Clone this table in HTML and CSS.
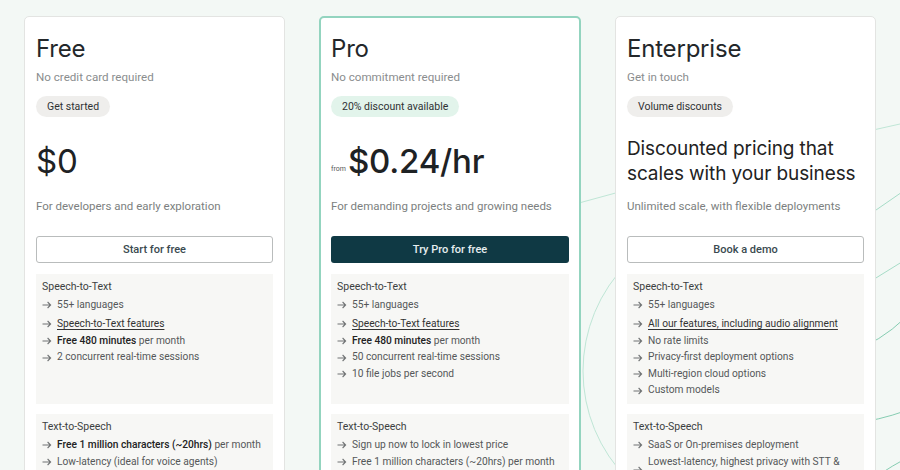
FILE: index.html
```html
<!DOCTYPE html>
<html lang="en">
<head>
<meta charset="utf-8">
<title>Pricing</title>
<link rel="stylesheet" href="styles.css">
</head>
<body>
<div class="stage">
  <svg class="deco" width="900" height="470" viewBox="0 0 900 470" aria-hidden="true">
    <path d="M540 214 Q700 168 900 124" class="l1"/>
    <path d="M736 218 A153 153 0 0 0 736 524" class="l1"/>
    <path d="M850 228 L905 190" class="l2"/>
    <path d="M850 294 L905 260" class="l2"/>
    <path d="M850 352 Q880 342 905 318" class="l3"/>
    <path d="M850 424 Q880 420 905 411" class="l3"/>
    <path d="M880 474 Q892 466 905 459" class="l3"/>
  </svg>
  <main class="plans">
    <section class="card">
      <h2 class="plan-name">Free</h2>
      <p class="plan-sub">No credit card required</p>
      <span class="badge">Get started</span>
      <div class="price-block"><span class="price">$0</span></div>
      <p class="plan-desc">For developers and early exploration</p>
      <a class="btn btn-outline" href="#">Start for free</a>
      <div class="feat feat-stt">
        <h3 class="feat-title">Speech-to-Text</h3>
        <ul>
          <li><svg class="arr" viewBox="0 0 10 10"><path d="M0.5 5h8.2M5.6 2L8.6 5 5.6 8"/></svg><span>55+ languages</span></li>
          <li class="link-item"><svg class="arr" viewBox="0 0 10 10"><path d="M0.5 5h8.2M5.6 2L8.6 5 5.6 8"/></svg><a href="#">Speech-to-Text features</a></li>
          <li><svg class="arr" viewBox="0 0 10 10"><path d="M0.5 5h8.2M5.6 2L8.6 5 5.6 8"/></svg><span><b>Free 480 minutes</b> per month</span></li>
          <li><svg class="arr" viewBox="0 0 10 10"><path d="M0.5 5h8.2M5.6 2L8.6 5 5.6 8"/></svg><span>2 concurrent real-time sessions</span></li>
        </ul>
      </div>
      <div class="feat">
        <h3 class="feat-title">Text-to-Speech</h3>
        <ul>
          <li><svg class="arr" viewBox="0 0 10 10"><path d="M0.5 5h8.2M5.6 2L8.6 5 5.6 8"/></svg><span><b>Free 1 million characters (~20hrs)</b> per month</span></li>
          <li><svg class="arr" viewBox="0 0 10 10"><path d="M0.5 5h8.2M5.6 2L8.6 5 5.6 8"/></svg><span>Low-latency (ideal for voice agents)</span></li>
          <li><svg class="arr" viewBox="0 0 10 10"><path d="M0.5 5h8.2M5.6 2L8.6 5 5.6 8"/></svg><span>Standard voices</span></li>
        </ul>
      </div>
    </section>

    <section class="card card-pro">
      <h2 class="plan-name">Pro</h2>
      <p class="plan-sub">No commitment required</p>
      <span class="badge badge-green">20% discount available</span>
      <div class="price-block"><span class="from">from</span><span class="price price-pro">$0.24/hr</span></div>
      <p class="plan-desc">For demanding projects and growing needs</p>
      <a class="btn btn-dark" href="#">Try Pro for free</a>
      <div class="feat feat-stt">
        <h3 class="feat-title">Speech-to-Text</h3>
        <ul>
          <li><svg class="arr" viewBox="0 0 10 10"><path d="M0.5 5h8.2M5.6 2L8.6 5 5.6 8"/></svg><span>55+ languages</span></li>
          <li class="link-item"><svg class="arr" viewBox="0 0 10 10"><path d="M0.5 5h8.2M5.6 2L8.6 5 5.6 8"/></svg><a href="#">Speech-to-Text features</a></li>
          <li><svg class="arr" viewBox="0 0 10 10"><path d="M0.5 5h8.2M5.6 2L8.6 5 5.6 8"/></svg><span><b>Free 480 minutes</b> per month</span></li>
          <li><svg class="arr" viewBox="0 0 10 10"><path d="M0.5 5h8.2M5.6 2L8.6 5 5.6 8"/></svg><span>50 concurrent real-time sessions</span></li>
          <li><svg class="arr" viewBox="0 0 10 10"><path d="M0.5 5h8.2M5.6 2L8.6 5 5.6 8"/></svg><span>10 file jobs per second</span></li>
        </ul>
      </div>
      <div class="feat">
        <h3 class="feat-title">Text-to-Speech</h3>
        <ul>
          <li><svg class="arr" viewBox="0 0 10 10"><path d="M0.5 5h8.2M5.6 2L8.6 5 5.6 8"/></svg><span>Sign up now to lock in lowest price</span></li>
          <li><svg class="arr" viewBox="0 0 10 10"><path d="M0.5 5h8.2M5.6 2L8.6 5 5.6 8"/></svg><span>Free 1 million characters (~20hrs) per month</span></li>
          <li><svg class="arr" viewBox="0 0 10 10"><path d="M0.5 5h8.2M5.6 2L8.6 5 5.6 8"/></svg><span>Low-latency (ideal for voice agents)</span></li>
        </ul>
      </div>
    </section>

    <section class="card">
      <h2 class="plan-name">Enterprise</h2>
      <p class="plan-sub">Get in touch</p>
      <span class="badge">Volume discounts</span>
      <div class="price-block"><span class="price-text">Discounted pricing that scales with your business</span></div>
      <p class="plan-desc">Unlimited scale, with flexible deployments</p>
      <a class="btn btn-outline" href="#">Book a demo</a>
      <div class="feat feat-stt">
        <h3 class="feat-title">Speech-to-Text</h3>
        <ul>
          <li><svg class="arr" viewBox="0 0 10 10"><path d="M0.5 5h8.2M5.6 2L8.6 5 5.6 8"/></svg><span>55+ languages</span></li>
          <li class="link-item"><svg class="arr" viewBox="0 0 10 10"><path d="M0.5 5h8.2M5.6 2L8.6 5 5.6 8"/></svg><a href="#">All our features, including audio alignment</a></li>
          <li><svg class="arr" viewBox="0 0 10 10"><path d="M0.5 5h8.2M5.6 2L8.6 5 5.6 8"/></svg><span>No rate limits</span></li>
          <li><svg class="arr" viewBox="0 0 10 10"><path d="M0.5 5h8.2M5.6 2L8.6 5 5.6 8"/></svg><span>Privacy-first deployment options</span></li>
          <li><svg class="arr" viewBox="0 0 10 10"><path d="M0.5 5h8.2M5.6 2L8.6 5 5.6 8"/></svg><span>Multi-region cloud options</span></li>
          <li><svg class="arr" viewBox="0 0 10 10"><path d="M0.5 5h8.2M5.6 2L8.6 5 5.6 8"/></svg><span>Custom models</span></li>
        </ul>
      </div>
      <div class="feat">
        <h3 class="feat-title">Text-to-Speech</h3>
        <ul>
          <li><svg class="arr" viewBox="0 0 10 10"><path d="M0.5 5h8.2M5.6 2L8.6 5 5.6 8"/></svg><span>SaaS or On-premises deployment</span></li>
          <li><svg class="arr" viewBox="0 0 10 10"><path d="M0.5 5h8.2M5.6 2L8.6 5 5.6 8"/></svg><span>Lowest-latency, highest privacy with STT &amp; TTS in one deployment</span></li>
        </ul>
      </div>
    </section>
  </main>
</div>
</body>
</html>
```

FILE: styles.css
```css
* { box-sizing: border-box; }

html, body {
  margin: 0;
  padding: 0;
  height: 470px;
  overflow: hidden;
  background: #f3f8f5;
  font-family: Roboto, "Liberation Sans", sans-serif;
  color: #222;
}

.stage {
  position: relative;
  width: 900px;
  height: 470px;
  overflow: hidden;
}

.deco {
  position: absolute;
  left: 0;
  top: 0;
  z-index: 0;
  fill: none;
}
.deco .l1 { stroke: #bfe6d6; stroke-width: 1; }
.deco .l2 { stroke: #a6dcc7; stroke-width: 1; }
.deco .l3 { stroke: #86cdb2; stroke-width: 1; }

.plans {
  position: relative;
  z-index: 1;
  display: grid;
  grid-template-columns: 261px 262px 261px;
  column-gap: 34px;
  padding: 16px 0 0 24px;
  align-items: start;
}

.card {
  background: #fff;
  border: 1px solid #e3e4e2;
  border-radius: 5px;
  padding: 18px 11px 20px;
  display: flex;
  flex-direction: column;
  align-items: flex-start;
}

.card-pro {
  border: 2px solid #93d4bf;
  padding: 17px 10px 20px;
}

.plan-name {
  margin: 0;
  font-family: Inter, Roboto, sans-serif;
  font-weight: 400;
  font-size: 24px;
  line-height: 28px;
  color: #23272a;
  letter-spacing: -0.2px;
}

.plan-sub {
  margin: 6px 0 0;
  font-size: 11.6px;
  line-height: 16px;
  color: #8a8d8e;
}

.badge {
  margin-top: 11px;
  display: inline-flex;
  align-items: center;
  height: 21px;
  padding: 0 11px;
  border-radius: 11px;
  background: #efeeec;
  font-size: 10.5px;
  font-weight: 400;
  color: #2f3234;
}
.badge-green { background: #e2f4eb; }

.price-block {
  margin-top: 14px;
  height: 60px;
  display: flex;
  align-items: center;
  width: 100%;
}

.price {
  font-family: Inter, Roboto, sans-serif;
  font-size: 33px;
  line-height: 40px;
  font-weight: 400;
  color: #1e2224;
  letter-spacing: -0.2px;
}

.price-pro {
  font-weight: 500;
}

.from {
  font-size: 7px;
  color: #555;
  margin-right: 2px;
  padding-top: 16px;
}

.price-text {
  font-family: Inter, Roboto, sans-serif;
  font-size: 19px;
  line-height: 25px;
  color: #222;
  letter-spacing: -0.1px;
}

.plan-desc {
  margin: 7px 0 0;
  font-size: 11.5px;
  line-height: 16px;
  color: #7c7f80;
}

.btn {
  margin-top: 22px;
  width: 100%;
  height: 27px;
  display: flex;
  align-items: center;
  justify-content: center;
  border-radius: 3px;
  font-size: 11px;
  font-weight: 500;
  text-decoration: none;
}
.btn-outline {
  border: 1px solid #b9bcbc;
  color: #3a4a50;
  background: #fff;
}
.btn-dark {
  background: #0f3944;
  color: #e6eef0;
}

.feat {
  width: 100%;
  margin-top: 11px;
  background: #f7f7f5;
  padding: 6px 6px 6px;
}
.feat + .feat { margin-top: 10px; }
.feat-stt { height: 130px; }

.feat-title {
  margin: 0;
  font-size: 10.5px;
  line-height: 14px;
  font-weight: 400;
  color: #3c3f41;
}

.feat ul {
  list-style: none;
  margin: 3px 0 0;
  padding: 0;
}

.feat li {
  display: flex;
  align-items: center;
  font-size: 10.2px;
  line-height: 16.6px;
  color: #555859;
}
.feat li.link-item { margin-top: 2.5px; }

.feat li b {
  font-weight: 500;
  color: #222;
}

.feat li a {
  color: #333;
  text-decoration: underline;
  text-underline-offset: 2px;
}

.arr {
  flex: none;
  width: 10px;
  height: 10px;
  margin-right: 5px;
  fill: none;
  stroke: #707374;
  stroke-width: 1.1;
}
```
